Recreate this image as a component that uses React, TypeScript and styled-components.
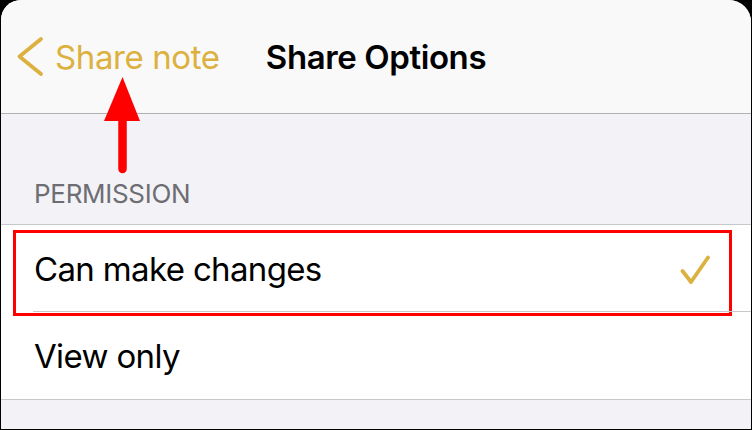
import React from 'react'
import styled, { createGlobalStyle } from 'styled-components'

const GOLD = '#dcb13f'

const GlobalStyle = createGlobalStyle`
  html, body {
    margin: 0;
    padding: 0;
    background: #000;
  }
  body {
    font-family: Inter, "Noto Sans", sans-serif;
    -webkit-font-smoothing: antialiased;
  }
`

export default function App() {
  return (
    <>
      <GlobalStyle />
      <Screen>
        <NavBar>
          <BackButton>
            <svg width="28" height="42" viewBox="0 0 28 42">
              <polyline
                points="25,3 3.5,20.5 25,38"
                fill="none"
                stroke={GOLD}
                strokeWidth="3.8"
                strokeLinecap="round"
                strokeLinejoin="round"
              />
            </svg>
            <BackLabel>Share note</BackLabel>
          </BackButton>
          <Title>Share Options</Title>
          <span />
        </NavBar>

        <SectionHeader>PERMISSION</SectionHeader>

        <List>
          <Row>
            <RowLabel>Can make changes</RowLabel>
            <svg width="32" height="32" viewBox="0 0 32 32">
              <polyline
                points="2.5,18 11,29 28,4.5"
                fill="none"
                stroke={GOLD}
                strokeWidth="3.8"
                strokeLinecap="round"
                strokeLinejoin="round"
              />
            </svg>
            <Highlight />
          </Row>
          <Row>
            <RowLabel>View only</RowLabel>
          </Row>
        </List>

        <Arrow width="44" height="104" viewBox="0 0 44 104">
          <line x1="22.5" y1="40" x2="22.5" y2="95" stroke="#ff0000" strokeWidth="8.5" strokeLinecap="round" />
          <polygon points="22.5,3 4,47 40,47" fill="#ff0000" />
        </Arrow>
      </Screen>
    </>
  )
}

const Screen = styled.div`
  position: relative;
  margin: 0 1px 1px 1px;
  height: 429px;
  border-radius: 20px 22px 0 0;
  overflow: hidden;
  background: #f2f2f7;
`

const NavBar = styled.div`
  display: grid;
  grid-template-columns: 1fr auto 1fr;
  align-items: center;
  height: 113px;
  background: #f9f9f9;
  border-bottom: 1px solid #b1b1b4;
`

const BackButton = styled.div`
  display: flex;
  align-items: center;
  gap: 11px;
  padding-left: 15px;
  color: ${GOLD};
`

const BackLabel = styled.span`
  font-size: 33px;
  line-height: 40px;
  letter-spacing: -0.4px;
`

const Title = styled.span`
  font-size: 33px;
  line-height: 40px;
  font-weight: 600;
  letter-spacing: -0.4px;
  color: #000;
`

const SectionHeader = styled.div`
  display: flex;
  align-items: flex-end;
  height: 110px;
  box-sizing: border-box;
  padding: 0 0 14px 33px;
  font-size: 26px;
  line-height: 32px;
  letter-spacing: -0.3px;
  color: #6d6d72;
`

const List = styled.div`
  background: #fff;
  border-top: 1px solid #c8c7cc;
  border-bottom: 1px solid #c8c7cc;
`

const Row = styled.div`
  position: relative;
  display: flex;
  align-items: center;
  justify-content: space-between;
  height: 87px;
  padding: 0 39px 0 33px;

  &::after {
    content: '';
    position: absolute;
    left: 32px;
    right: 0;
    bottom: 0;
    height: 1px;
    background: #c8c7cc;
  }

  &:last-child::after {
    display: none;
  }
`

const RowLabel = styled.span`
  font-size: 33px;
  line-height: 40px;
  letter-spacing: -0.65px;
  color: #000;
`

const Highlight = styled.div`
  position: absolute;
  top: 5px;
  left: 12px;
  right: 19px;
  bottom: -4px;
  border: 3px solid #ff0000;
  pointer-events: none;
`

const Arrow = styled.svg`
  position: absolute;
  left: 99px;
  top: 74px;
`
